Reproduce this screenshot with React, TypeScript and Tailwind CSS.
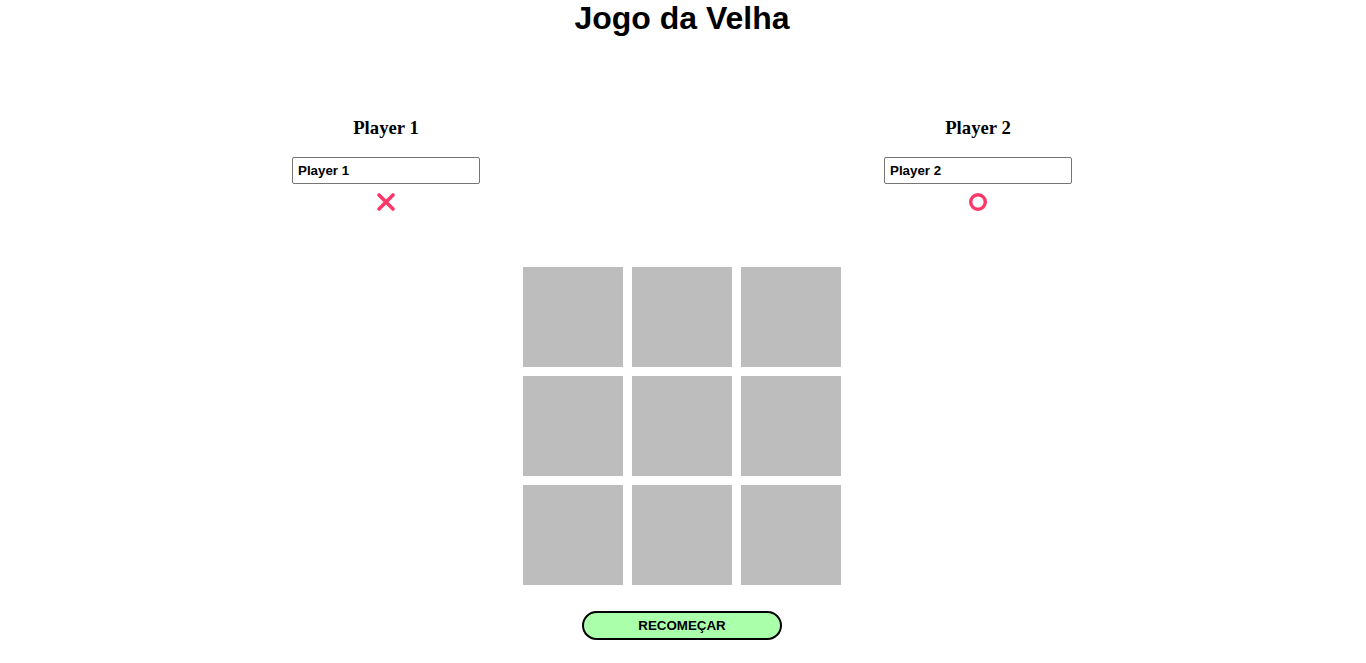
import React, { useState } from "react";

const PlayerX = () => (
  <svg width="20" height="20" viewBox="0 0 20 20" className="block">
    <path
      d="M3 3 L17 17 M17 3 L3 17"
      stroke="#fe3768"
      strokeWidth="3.6"
      strokeLinecap="round"
      fill="none"
    />
  </svg>
);

const PlayerO = () => (
  <svg width="20" height="20" viewBox="0 0 20 20" className="block">
    <circle cx="10" cy="10" r="7.3" stroke="#fe3768" strokeWidth="3.4" fill="none" />
  </svg>
);

type PlayerProps = { title: string; value: string; icon: React.ReactNode };

const PlayerCard = ({ title, value, icon }: PlayerProps) => {
  const [name, setName] = useState(value);
  return (
    <div className="w-[188px] flex flex-col items-center">
      <h3 className={styles.player_title}>{title}</h3>
      <input
        type="text"
        value={name}
        onChange={(e) => setName(e.target.value)}
        className={styles.player_input}
      />
      <div className="mt-[8px] h-[21px]">{icon}</div>
    </div>
  );
};

const App = () => {
  const [board, setBoard] = useState<string[]>(Array(9).fill(""));

  return (
    <div className="w-full min-h-screen bg-white pr-[2px] flex flex-col items-center">
      <h1 className={styles.title}>Jogo da Velha</h1>

      {/* players */}
      <div className="mt-[81px] flex gap-[404px]">
        <PlayerCard title="Player 1" value="Player 1" icon={<PlayerX />} />
        <PlayerCard title="Player 2" value="Player 2" icon={<PlayerO />} />
      </div>

      {/* board */}
      <div className="mt-[54px] grid grid-cols-[100px_100px_100px] gap-[9px]">
        {board.map((cell, index) => (
          <div
            key={index}
            className="w-[100px] h-[100px] bg-[#bdbdbd]"
            onClick={() => {
              const next = [...board];
              next[index] = cell;
              setBoard(next);
            }}
          />
        ))}
      </div>

      <button className={styles.button} onClick={() => setBoard(Array(9).fill(""))}>
        RECOMEÇAR
      </button>
    </div>
  );
};

export default App;

const styles = {
  title:
    "text-[32px] leading-[37px] font-bold text-black [font-family:'Liberation_Sans',Arial,sans-serif]",
  player_title:
    "text-[18.72px] leading-[19px] font-bold text-black [font-family:'Liberation_Serif','Times_New_Roman',serif]",
  player_input:
    "mt-[20px] w-[188px] h-[27px] border border-[#767676] rounded-[2px] pl-[5px] text-[13.33px] font-bold text-black outline-none [font-family:'Liberation_Sans',Arial,sans-serif]",
  button:
    "mt-[26px] w-[200px] h-[29px] border-2 border-black rounded-full bg-[#aaffaa] text-[13.33px] font-bold text-black [font-family:'Liberation_Sans',Arial,sans-serif]",
};
